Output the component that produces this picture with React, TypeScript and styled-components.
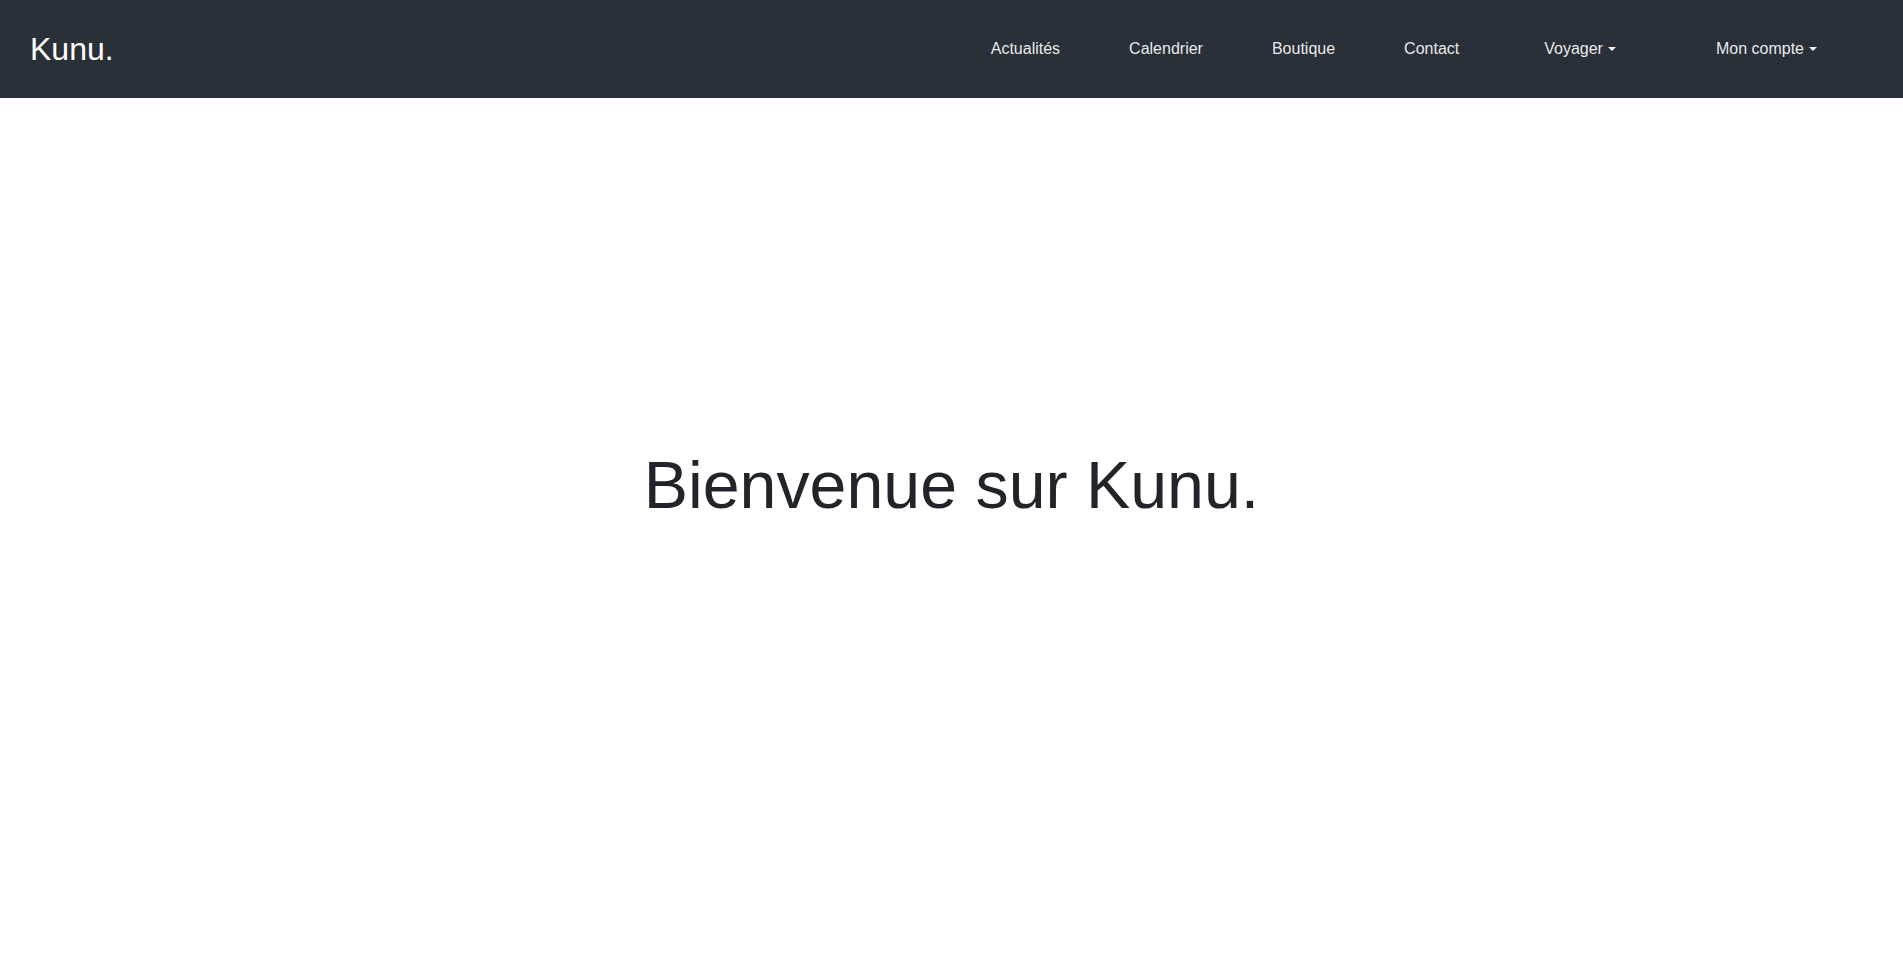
import React from "react";
import styled, { createGlobalStyle } from "styled-components";

const Global = createGlobalStyle`
  html, body { margin: 0; padding: 0; background: #fff; }
  body { font-family: "Liberation Sans", Arial, sans-serif; color: #212529; }
  * { box-sizing: border-box; }
`;

const Navbar = styled.nav`
  height: 98px;
  background: #2a3038;
  display: flex;
  align-items: center;
  justify-content: space-between;
  padding: 0 86px 0 30px;
`;

const Brand = styled.a`
  font-size: 32px;
  line-height: 1.5;
  color: #fff;
  text-decoration: none;
`;

const NavList = styled.ul`
  list-style: none;
  margin: 0;
  padding: 0;
  display: flex;
  align-items: center;
`;

const NavItem = styled.li<{ $gap: number }>`
  margin-left: ${(p) => p.$gap}px;
`;

const NavLink = styled.a`
  display: inline-flex;
  align-items: center;
  font-size: 16px;
  line-height: 1.5;
  color: rgba(255, 255, 255, 0.92);
  text-decoration: none;
  white-space: nowrap;
`;

const Caret = styled.span`
  display: inline-block;
  margin-left: 5px;
  width: 0;
  height: 0;
  border-top: 4.8px solid currentColor;
  border-left: 4.4px solid transparent;
  border-right: 4.4px solid transparent;
`;

const Main = styled.main`
  padding-top: 348px;
  display: flex;
  justify-content: center;
`;

const Title = styled.h1`
  margin: 0;
  font-weight: 400;
  font-size: 66.3px;
  line-height: 1.2;
  color: #212529;
`;

const links: { label: string; gap: number; dropdown?: boolean }[] = [
  { label: "Actualités", gap: 0 },
  { label: "Calendrier", gap: 69 },
  { label: "Boutique", gap: 69 },
  { label: "Contact", gap: 69 },
  { label: "Voyager", gap: 85, dropdown: true },
  { label: "Mon compte", gap: 100, dropdown: true },
];

export default function App() {
  return (
    <>
      <Global />
      <Navbar>
        <Brand href="#">Kunu.</Brand>
        <NavList>
          {links.map((l) => (
            <NavItem key={l.label} $gap={l.gap}>
              <NavLink href="#">
                {l.label}
                {l.dropdown && <Caret />}
              </NavLink>
            </NavItem>
          ))}
        </NavList>
      </Navbar>
      <Main>
        <Title>Bienvenue sur Kunu.</Title>
      </Main>
    </>
  );
}
